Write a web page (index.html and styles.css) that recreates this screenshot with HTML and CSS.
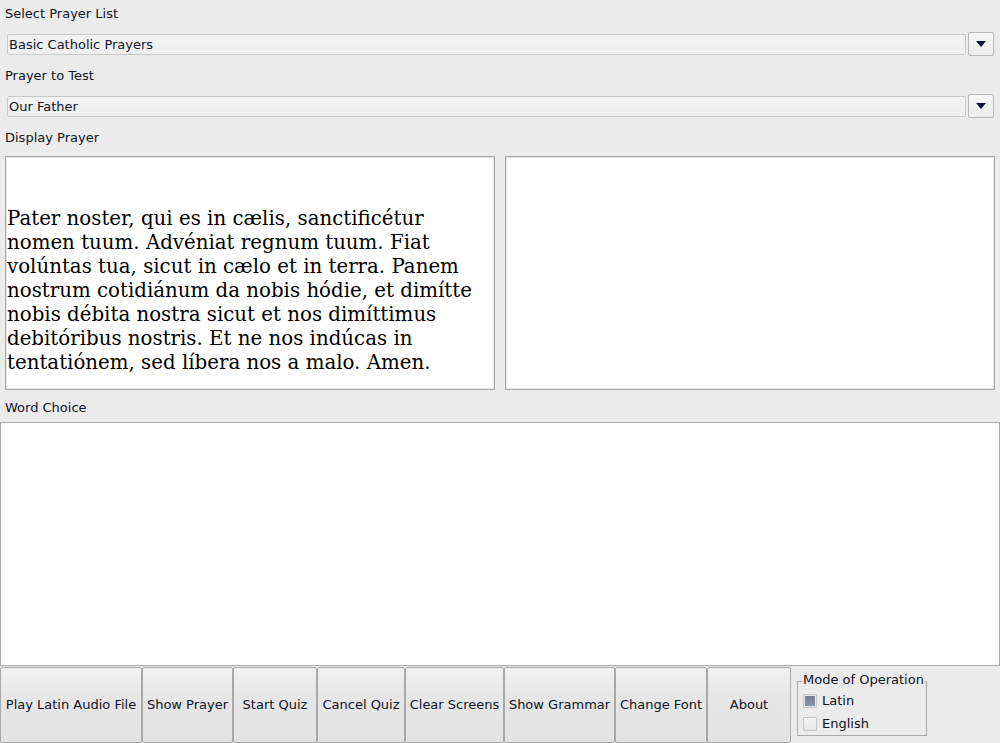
FILE: index.html
```html
<!DOCTYPE html>
<html>
<head>
<meta charset="utf-8">
<link rel="stylesheet" href="styles.css">
</head>
<body>
<div class="app">
  <div class="label first">Select Prayer List</div>
  <div class="combo">
    <div class="combo-field">Basic Catholic Prayers</div>
    <div class="combo-btn"><svg width="10" height="6" viewBox="0 0 10 6"><path d="M0 0H10L5 6Z" fill="#0c1632"/></svg></div>
  </div>
  <div class="label">Prayer to Test</div>
  <div class="combo">
    <div class="combo-field">Our Father</div>
    <div class="combo-btn"><svg width="10" height="6" viewBox="0 0 10 6"><path d="M0 0H10L5 6Z" fill="#0c1632"/></svg></div>
  </div>
  <div class="label">Display Prayer</div>
  <div class="panes">
    <div class="pane prayer">Pater noster, qui es in cælis, sanctificétur<br>nomen tuum. Advéniat regnum tuum. Fiat<br>volúntas tua, sicut in cælo et in terra. Panem<br>nostrum cotidiánum da nobis hódie, et dimítte<br>nobis débita nostra sicut et nos dimíttimus<br>debitóribus nostris. Et ne nos indúcas in<br>tentatiónem, sed líbera nos a malo. Amen.</div>
    <div class="pane"></div>
  </div>
  <div class="label word-label">Word Choice</div>
  <div class="word"></div>
  <div class="toolbar">
    <div class="btn w142">Play Latin Audio File</div>
    <div class="btn w91">Show Prayer</div>
    <div class="btn w84">Start Quiz</div>
    <div class="btn w88">Cancel Quiz</div>
    <div class="btn w99">Clear Screens</div>
    <div class="btn w111">Show Grammar</div>
    <div class="btn w92">Change Font</div>
    <div class="btn w84">About</div>
    <fieldset class="group">
      <legend>Mode of Operation</legend>
      <div class="check-row"><span class="box checked"></span><span>Latin</span></div>
      <div class="check-row"><span class="box"></span><span>English</span></div>
    </fieldset>
  </div>
</div>
</body>
</html>
```
FILE: styles.css
```css
html, body {
  margin: 0;
  padding: 0;
}
body {
  width: 1000px;
  height: 743px;
  overflow: hidden;
  background: #ebebeb;
  font-family: "DejaVu Sans", "Liberation Sans", sans-serif;
  font-size: 13px;
  color: #0f1426;
}
.app {
  display: flex;
  flex-direction: column;
  height: 743px;
}
.label {
  line-height: 15px;
  height: 15px;
  padding-left: 5px;
  margin-top: 12px;
}
.label.first {
  margin-top: 6px;
}
.word-label {
  margin-top: 10px;
}
.combo {
  display: flex;
  margin-top: 11px;
  height: 24px;
  padding: 0 6px 0 7px;
}
.combo-field {
  flex: 1;
  box-sizing: border-box;
  height: 21px;
  margin-top: 2px;
  margin-right: 2px;
  border: 1px solid #c9c9c9;
  border-radius: 2px;
  background: linear-gradient(#f3f3f3, #eeeeee);
  line-height: 19px;
  padding-left: 1px;
}
.combo-btn {
  box-sizing: border-box;
  width: 26px;
  height: 24px;
  border: 1px solid #b9b9b9;
  border-radius: 2px;
  background: linear-gradient(#f6f6f6, #ececec);
  display: flex;
  align-items: center;
  justify-content: center;
}
.panes {
  display: flex;
  gap: 10px;
  margin-top: 11px;
  padding: 0 5px;
  height: 234px;
}
.pane {
  box-sizing: border-box;
  width: 490px;
  height: 234px;
  background: #ffffff;
  border: 1px solid #a9a9a9;
  box-shadow: inset 0 0 0 1px #e4e4e4;
}
.prayer {
  font-family: "DejaVu Serif", "Liberation Serif", serif;
  font-size: 19.8px;
  line-height: 24px;
  color: #000;
  padding: 50px 0 0 1px;
  white-space: nowrap;
}
.word {
  box-sizing: border-box;
  margin-top: 7px;
  height: 244px;
  background: #ffffff;
  border: 1px solid #a9a9a9;
}
.toolbar {
  display: flex;
  margin-top: 1px;
  height: 76px;
}
.btn {
  box-sizing: border-box;
  height: 76px;
  padding-bottom: 2px;
  border: 1px solid #a8a8a8;
  border-radius: 2px;
  background: linear-gradient(#f1f1f1, #e6e6e6 40%, #e3e3e3);
  display: flex;
  align-items: center;
  justify-content: center;
  white-space: nowrap;
}
.w142 { width: 142px; }
.w91 { width: 91px; }
.w84 { width: 84px; }
.w88 { width: 88px; }
.w99 { width: 99px; }
.w111 { width: 111px; }
.w92 { width: 92px; }
.group {
  box-sizing: border-box;
  margin: 5px 0 0 6px;
  width: 130px;
  height: 64px;
  padding: 0 0 0 4px;
  border: 1px solid #a9a9a9;
  min-width: 0;
}
.group legend {
  padding: 0 1px 4px 1px;
  margin-left: 0;
  margin-bottom: -2px;
  line-height: 15px;
}
.check-row {
  display: flex;
  align-items: center;
  gap: 5px;
  height: 23px;
  padding-left: 1px;
}
.box {
  box-sizing: border-box;
  width: 14px;
  height: 14px;
  border: 1px solid #c4c4c4;
  border-radius: 1px;
  background: linear-gradient(#f4f4f4, #e6e6e6);
}
.box.checked {
  background: linear-gradient(#6f7d90, #8d98a7);
  box-shadow: inset 0 0 0 1px #e9e9e9;
}
```
